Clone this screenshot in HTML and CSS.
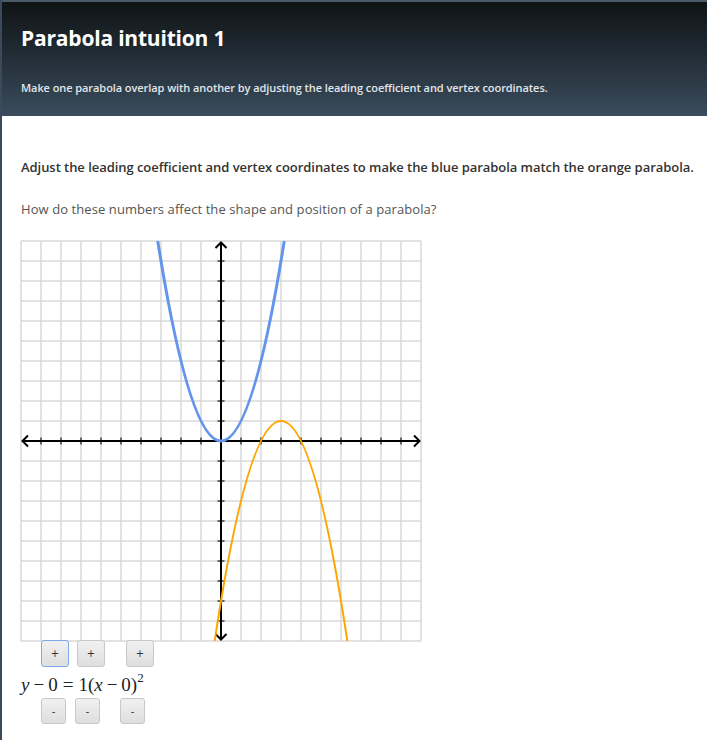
FILE: index.html
```html
<!DOCTYPE html>
<html>
<head>
<meta charset="utf-8">
<link rel="stylesheet" href="styles.css">
</head>
<body>
<div class="page">
  <header class="hero">
    <h1 class="title">Parabola intuition 1</h1>
    <p class="subtitle">Make one parabola overlap with another by adjusting the leading coefficient and vertex coordinates.</p>
  </header>
  <main class="content">
    <p class="lead">Adjust the leading coefficient and vertex coordinates to make the blue parabola match the orange parabola.</p>
    <p class="question">How do these numbers affect the shape and position of a parabola?</p>
    <div class="graph">
      <svg width="402" height="402" viewBox="20 239 402 402" xmlns="http://www.w3.org/2000/svg">
        <defs>
          <clipPath id="clip"><rect x="21" y="240" width="400" height="400"/></clipPath>
        </defs>
        <g stroke="#d9d9d9" stroke-width="1.5">
          <line x1="21" y1="240" x2="21" y2="640"/><line x1="41" y1="240" x2="41" y2="640"/><line x1="61" y1="240" x2="61" y2="640"/><line x1="81" y1="240" x2="81" y2="640"/><line x1="101" y1="240" x2="101" y2="640"/><line x1="121" y1="240" x2="121" y2="640"/><line x1="141" y1="240" x2="141" y2="640"/><line x1="161" y1="240" x2="161" y2="640"/><line x1="181" y1="240" x2="181" y2="640"/><line x1="201" y1="240" x2="201" y2="640"/><line x1="241" y1="240" x2="241" y2="640"/><line x1="261" y1="240" x2="261" y2="640"/><line x1="281" y1="240" x2="281" y2="640"/><line x1="301" y1="240" x2="301" y2="640"/><line x1="321" y1="240" x2="321" y2="640"/><line x1="341" y1="240" x2="341" y2="640"/><line x1="361" y1="240" x2="361" y2="640"/><line x1="381" y1="240" x2="381" y2="640"/><line x1="401" y1="240" x2="401" y2="640"/><line x1="421" y1="240" x2="421" y2="640"/>
          <line x1="21" y1="240" x2="421" y2="240"/><line x1="21" y1="260" x2="421" y2="260"/><line x1="21" y1="280" x2="421" y2="280"/><line x1="21" y1="300" x2="421" y2="300"/><line x1="21" y1="320" x2="421" y2="320"/><line x1="21" y1="340" x2="421" y2="340"/><line x1="21" y1="360" x2="421" y2="360"/><line x1="21" y1="380" x2="421" y2="380"/><line x1="21" y1="400" x2="421" y2="400"/><line x1="21" y1="420" x2="421" y2="420"/><line x1="21" y1="460" x2="421" y2="460"/><line x1="21" y1="480" x2="421" y2="480"/><line x1="21" y1="500" x2="421" y2="500"/><line x1="21" y1="520" x2="421" y2="520"/><line x1="21" y1="540" x2="421" y2="540"/><line x1="21" y1="560" x2="421" y2="560"/><line x1="21" y1="580" x2="421" y2="580"/><line x1="21" y1="600" x2="421" y2="600"/><line x1="21" y1="620" x2="421" y2="620"/><line x1="21" y1="640" x2="421" y2="640"/>
        </g>
        <g stroke="#666" stroke-width="2">
          <line x1="41" y1="436.5" x2="41" y2="443.5"/><line x1="61" y1="436.5" x2="61" y2="443.5"/><line x1="81" y1="436.5" x2="81" y2="443.5"/><line x1="101" y1="436.5" x2="101" y2="443.5"/><line x1="121" y1="436.5" x2="121" y2="443.5"/><line x1="141" y1="436.5" x2="141" y2="443.5"/><line x1="161" y1="436.5" x2="161" y2="443.5"/><line x1="181" y1="436.5" x2="181" y2="443.5"/><line x1="201" y1="436.5" x2="201" y2="443.5"/><line x1="241" y1="436.5" x2="241" y2="443.5"/><line x1="261" y1="436.5" x2="261" y2="443.5"/><line x1="281" y1="436.5" x2="281" y2="443.5"/><line x1="301" y1="436.5" x2="301" y2="443.5"/><line x1="321" y1="436.5" x2="321" y2="443.5"/><line x1="341" y1="436.5" x2="341" y2="443.5"/><line x1="361" y1="436.5" x2="361" y2="443.5"/><line x1="381" y1="436.5" x2="381" y2="443.5"/><line x1="401" y1="436.5" x2="401" y2="443.5"/>
          <line x1="217.5" y1="260" x2="224.5" y2="260"/><line x1="217.5" y1="280" x2="224.5" y2="280"/><line x1="217.5" y1="300" x2="224.5" y2="300"/><line x1="217.5" y1="320" x2="224.5" y2="320"/><line x1="217.5" y1="340" x2="224.5" y2="340"/><line x1="217.5" y1="360" x2="224.5" y2="360"/><line x1="217.5" y1="380" x2="224.5" y2="380"/><line x1="217.5" y1="400" x2="224.5" y2="400"/><line x1="217.5" y1="420" x2="224.5" y2="420"/><line x1="217.5" y1="460" x2="224.5" y2="460"/><line x1="217.5" y1="480" x2="224.5" y2="480"/><line x1="217.5" y1="500" x2="224.5" y2="500"/><line x1="217.5" y1="520" x2="224.5" y2="520"/><line x1="217.5" y1="540" x2="224.5" y2="540"/><line x1="217.5" y1="560" x2="224.5" y2="560"/><line x1="217.5" y1="580" x2="224.5" y2="580"/><line x1="217.5" y1="600" x2="224.5" y2="600"/><line x1="217.5" y1="620" x2="224.5" y2="620"/>
        </g>
        <g stroke="#000" stroke-width="2" fill="none">
          <line x1="22" y1="440" x2="420" y2="440"/>
          <line x1="221" y1="241" x2="221" y2="639"/>
          <polyline points="28,434.5 22.5,440 28,445.5"/>
          <polyline points="414,434.5 419.5,440 414,445.5"/>
          <polyline points="215.5,247 221,241.5 226.5,247"/>
          <polyline points="215.5,633 221,638.5 226.5,633"/>
        </g>
        <g clip-path="url(#clip)" fill="none">
          <path d="M157.75 240 Q221 640 284.25 240" stroke="#6495ed" stroke-width="3"/>
          <path d="M214.67 640 Q281 200 347.33 640" stroke="#ffa500" stroke-width="2"/>
        </g>
      </svg>
    </div>
    <div class="btn-row plus-row">
      <button class="step step-focus">+</button>
      <button class="step step-b">+</button>
      <button class="step step-c">+</button>
    </div>
    <div class="equation">
      <span class="mi">y</span><span class="mo">−</span><span class="mn">0</span><span class="rel">=</span><span class="mn">1(</span><span class="mi">x</span><span class="mo">−</span><span class="mn">0)</span><sup class="sup">2</sup>
    </div>
    <div class="btn-row minus-row">
      <button class="step step-sm">-</button>
      <button class="step step-sm step-b2">-</button>
      <button class="step step-sm step-c2">-</button>
    </div>
  </main>
</div>
</body>
</html>
```

FILE: styles.css
```css
* { box-sizing: border-box; }
html, body { margin: 0; padding: 0; background: #fff; }
body { font-family: "Open Sans", Lato, sans-serif; }
.page {
  min-height: 740px;
  border-left: 2px solid #3a4a5b;
  background: #fff;
}
.hero {
  height: 116px;
  padding: 0 0 0 19px;
  border-top: 2px solid #4b5a69;
  background: linear-gradient(to bottom, #101417 0%, #1f2931 40%, #3a4c5d 100%);
  overflow: hidden;
}
.title {
  margin: 22px 0 0 0;
  font-size: 21px;
  line-height: 28px;
  font-weight: 700;
  letter-spacing: -0.2px;
  color: #fff;
}
.subtitle {
  margin: 29px 0 0 0;
  font-size: 11px;
  line-height: 14px;
  font-weight: 600;
  letter-spacing: -0.07px;
  color: #e2e5e8;
}
.content { padding: 0 0 0 19px; }
.lead {
  margin: 42px 0 0 0;
  font-size: 13px;
  line-height: 18px;
  font-weight: 600;
  letter-spacing: -0.05px;
  color: #333;
}
.question {
  margin: 24px 0 0 0;
  font-size: 13px;
  line-height: 18px;
  letter-spacing: 0.08px;
  color: #555;
}
.graph { margin-top: 22px; height: 402px; margin-left: -1px; }
.graph svg { display: block; }
.btn-row { display: flex; align-items: flex-start; }
.plus-row { height: 27px; margin-top: -2px; padding-left: 20px; }
.step {
  width: 28px; height: 27px;
  margin: 0;
  padding: 0;
  border: 1px solid #c8c8c8;
  border-radius: 3px;
  background: linear-gradient(to bottom, #f1f1f1, #dedede);
  font-family: "DejaVu Sans", sans-serif;
  font-size: 10px;
  color: #333;
  line-height: 25px;
}
.step-focus { border: 1.5px solid #7fa8e8; }
.step-b { margin-left: 8px; }
.step-c { margin-left: 21px; }
.equation {
  height: 31px;
  padding-top: 6px;
  font-family: "Liberation Serif", "DejaVu Serif", serif;
  font-size: 19px;
  color: #222;
  line-height: 24px;
  overflow: visible;
}
.mi { font-style: italic; }
.mo { margin: 0 4px; }
.rel { margin: 0 5px; }
.sup { font-size: 13px; vertical-align: 9px; line-height: 0; }
.minus-row { height: 26px; padding-left: 20px; }
.step-sm { width: 25px; height: 26px; }
.step-b2 { margin-left: 9px; }
.step-c2 { margin-left: 20px; }
```
